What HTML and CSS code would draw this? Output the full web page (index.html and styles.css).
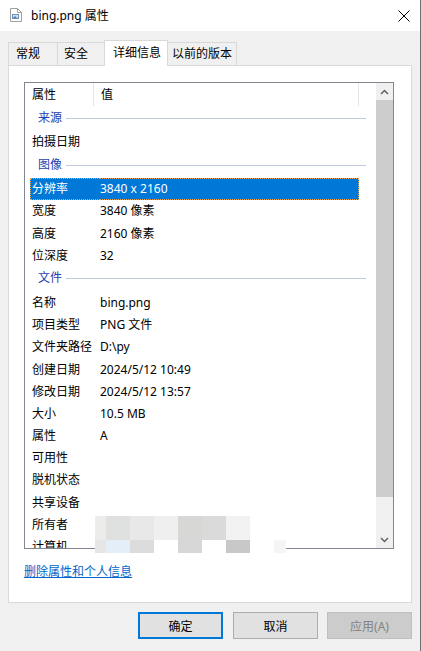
FILE: index.html
```html
<!DOCTYPE html>
<html lang="zh-CN">
<head>
    <meta charset="UTF-8">
    <title>bing.png 属性</title>
    <link rel="stylesheet" href="styles.css">
</head>
<body>
    <div class="window">
        <div class="titlebar">
            <svg class="file-icon" width="12" height="14" viewBox="0 0 12 14">
                <path d="M0.5 0.5 H7.5 L11.5 4.5 V13.5 H0.5 Z" fill="#fff" stroke="#a0a0a0"/>
                <path d="M7.5 0.5 V4.5 H11.5" fill="none" stroke="#a0a0a0"/>
                <rect x="2.5" y="6.5" width="6" height="4" fill="#cfe0f2" stroke="#6f8fb8"/>
                <path d="M3 10 L5 8 L7 10 Z" fill="#4a78b0"/>
            </svg>
            <span class="title">bing.png 属性</span>
            <svg class="close" width="12" height="12" viewBox="0 0 12 12">
                <path d="M0.5 0.5 L11.5 11.5 M11.5 0.5 L0.5 11.5" stroke="#000" stroke-width="1"/>
            </svg>
        </div>

        <div class="body">
            <div class="tabs">
                <div class="tab t1">常规</div>
                <div class="tab t2">安全</div>
                <div class="tab t3 active">详细信息</div>
                <div class="tab t4">以前的版本</div>
            </div>

            <div class="panel">
                <div class="list-wrap">
                    <div class="list">
                        <div class="list-main">
                            <div class="header">
                                <div class="hcol name-col">属性</div>
                                <div class="hcol value-col">值</div>
                            </div>
                            <div class="group"><span>来源</span><i></i></div>
                            <div class="row"><span class="name">拍摄日期</span><span class="value"></span></div>
                            <div class="group"><span>图像</span><i></i></div>
                            <div class="row selected"><span class="name">分辨率</span><span class="value">3840 x 2160</span></div>
                            <div class="row"><span class="name">宽度</span><span class="value">3840 像素</span></div>
                            <div class="row"><span class="name">高度</span><span class="value">2160 像素</span></div>
                            <div class="row"><span class="name">位深度</span><span class="value">32</span></div>
                            <div class="group"><span>文件</span><i></i></div>
                            <div class="row"><span class="name">名称</span><span class="value">bing.png</span></div>
                            <div class="row"><span class="name">项目类型</span><span class="value">PNG 文件</span></div>
                            <div class="row"><span class="name">文件夹路径</span><span class="value">D:\py</span></div>
                            <div class="row"><span class="name">创建日期</span><span class="value">2024/5/12 10:49</span></div>
                            <div class="row"><span class="name">修改日期</span><span class="value">2024/5/12 13:57</span></div>
                            <div class="row"><span class="name">大小</span><span class="value">10.5 MB</span></div>
                            <div class="row"><span class="name">属性</span><span class="value">A</span></div>
                            <div class="row"><span class="name">可用性</span><span class="value"></span></div>
                            <div class="row"><span class="name">脱机状态</span><span class="value"></span></div>
                            <div class="row"><span class="name">共享设备</span><span class="value"></span></div>
                            <div class="row"><span class="name">所有者</span><span class="value"></span></div>
                            <div class="row"><span class="name">计算机</span><span class="value"></span></div>
                        </div>
                        <div class="scrollbar">
                            <div class="sb-btn">
                                <svg width="9" height="6" viewBox="0 0 9 6"><path d="M1 5 L4.5 1.5 L8 5" fill="none" stroke="#606060" stroke-width="1.5"/></svg>
                            </div>
                            <div class="sb-track"><div class="sb-thumb"></div></div>
                            <div class="sb-btn">
                                <svg width="9" height="6" viewBox="0 0 9 6"><path d="M1 1 L4.5 4.5 L8 1" fill="none" stroke="#606060" stroke-width="1.5"/></svg>
                            </div>
                        </div>
                    </div>
                    <!-- pixelated cover over the owner / computer values -->
                    <div class="blur">
                        <b class="p1"></b><b class="p2"></b><b class="p3"></b><b class="p4"></b><b class="p5"></b><b class="p6"></b><b class="p7"></b><b></b><b></b>
                        <b class="q1"></b><b class="q2"></b><b class="q3"></b><b class="w"></b><b class="q5"></b><b class="w"></b><b class="q7"></b><b class="w"></b><b class="q9"></b>
                    </div>
                </div>
                <a class="link" href="#">删除属性和个人信息</a>
            </div>

            <div class="buttons">
                <button class="btn default">确定</button>
                <button class="btn cancel">取消</button>
                <button class="btn apply" disabled>应用(A)</button>
            </div>
        </div>
    </div>
</body>
</html>
```

FILE: styles.css
```css
body {
    margin: 0;
    padding: 0;
    font-family: "Noto Sans", "Noto Sans CJK SC", sans-serif;
    font-size: 12px;
    color: #000;
    background-color: #f0f0f0;
}

.window {
    width: 420px;
    height: 651px;
    border-right: 1px solid #707070;
    background-color: #f0f0f0;
}

.titlebar {
    height: 31px;
    background-color: #fff;
    display: flex;
    align-items: center;
}

.file-icon {
    margin-left: 10px;
    margin-top: -1px;
}

.title {
    margin-left: 9px;
    font-size: 12px;
    line-height: 16px;
}

.close {
    margin-left: auto;
    margin-right: 10px;
}

.body {
    padding-top: 9px;
}

.tabs {
    display: flex;
    align-items: flex-end;
    padding-left: 8px;
    height: 25px;
    position: relative;
    z-index: 1;
}

.tab {
    box-sizing: border-box;
    height: 23px;
    line-height: 22px;
    white-space: nowrap;
    border: 1px solid #d9d9d9;
    border-bottom: none;
    margin-right: -1px;
    background-color: #f0f0f0;
}

.tab.t1 { width: 50px; padding-left: 7px; }
.tab.t2 { width: 48px; padding-left: 6px; }
.tab.t3 { width: 64px; padding-left: 8px; }
.tab.t4 { width: 70px; padding-left: 4px; }

.tab.active {
    height: 26px;
    line-height: 24px;
    margin-bottom: -1px;
    background-color: #fff;
    position: relative;
    z-index: 2;
}

.panel {
    margin: 0 8px;
    border: 1px solid #d9d9d9;
    background-color: #fff;
    padding: 16px 17px 0 15px;
    box-sizing: border-box;
    height: 538px;
}

.list-wrap {
    position: relative;
}

.list {
    height: 465px;
    border: 1px solid #828790;
    display: flex;
    overflow: hidden;
}

.list-main {
    flex: 1;
    overflow: hidden;
}

.header {
    display: flex;
    height: 23px;
    line-height: 23px;
}

.hcol {
    border-right: 1px solid #e5e5e5;
    padding-left: 7px;
    box-sizing: border-box;
}

.hcol.name-col { width: 69px; }
.hcol.value-col { width: 265px; }

.group {
    display: flex;
    align-items: center;
    height: 25px;
    margin-left: 13px;
    color: #1e40b0;
}

.group span {
    line-height: 16px;
    margin-top: -2px;
}

.group i {
    display: block;
    height: 1px;
    width: 300px;
    margin-left: 4px;
    margin-top: -1px;
    background-color: #bfcadf;
}

.row {
    display: flex;
    height: 22.2px;
    line-height: 20px;
    margin-left: 5px;
    width: 329px;
    box-sizing: border-box;
    padding: 1px 0;
}

.row .name, .row .value {
    display: block;
}

.row .name {
    width: 68px;
    padding-left: 2px;
}

.row.selected {
    padding: 0;
}

.row.selected .name,
.row.selected .value {
    background-color: #0078d7;
    color: #fff;
}

.row.selected .name {
    width: 70px;
    padding-left: 1px;
    box-sizing: border-box;
    border: 1px dotted #e9a45a;
    border-right: none;
}

.row.selected .value {
    flex: 1;
    border: 1px dotted #e9a45a;
    border-left: none;
}

.scrollbar {
    width: 17px;
    background-color: #f0f0f0;
    display: flex;
    flex-direction: column;
}

.sb-btn {
    height: 17px;
    display: flex;
    align-items: center;
    justify-content: center;
}

.sb-track {
    flex: 1;
}

.sb-thumb {
    height: 397px;
    background-color: #cdcdcd;
}

.blur {
    position: absolute;
    left: 71px;
    top: 434px;
    display: grid;
    grid-template-columns: 11px repeat(7, 24px) 12px;
    grid-template-rows: 24px 13px;
}

.blur .p1 { background: #ececeb; }
.blur .p2 { background: #dfe1e0; }
.blur .p3 { background: #e8e8e8; }
.blur .p4 { background: #efefef; }
.blur .p5 { background: #d7d7d5; }
.blur .p6 { background: #dadadb; }
.blur .p7 { background: #f2f2f2; }
.blur .q1 { background: #e6e6e6; }
.blur .q2 { background: #e3eef8; }
.blur .q3 { background: #dcdcdc; }
.blur .q5 { background: #d7d7d7; }
.blur .q7 { background: #c8c8c8; }
.blur .q9 { background: #f5f5f5; }
.blur .w { background: #fff; }

.link {
    display: inline-block;
    margin-top: 15px;
    line-height: 16px;
    color: #0066cc;
    text-decoration: underline;
}

.buttons {
    display: flex;
    justify-content: flex-end;
    padding-right: 8px;
    margin-top: 9px;
}

.btn {
    width: 85px;
    height: 27px;
    font-family: "Noto Sans", "Noto Sans CJK SC", sans-serif;
    font-size: 12px;
    color: #000;
    background-color: #e1e1e1;
    border: 1px solid #adadad;
    padding: 0;
}

.btn.default {
    border: 2px solid #0078d7;
}

.btn.cancel {
    margin-left: 10px;
}

.btn.apply {
    margin-left: 9px;
    background-color: #cccccc;
    border-color: #bfbfbf;
    color: #838383;
}
```
